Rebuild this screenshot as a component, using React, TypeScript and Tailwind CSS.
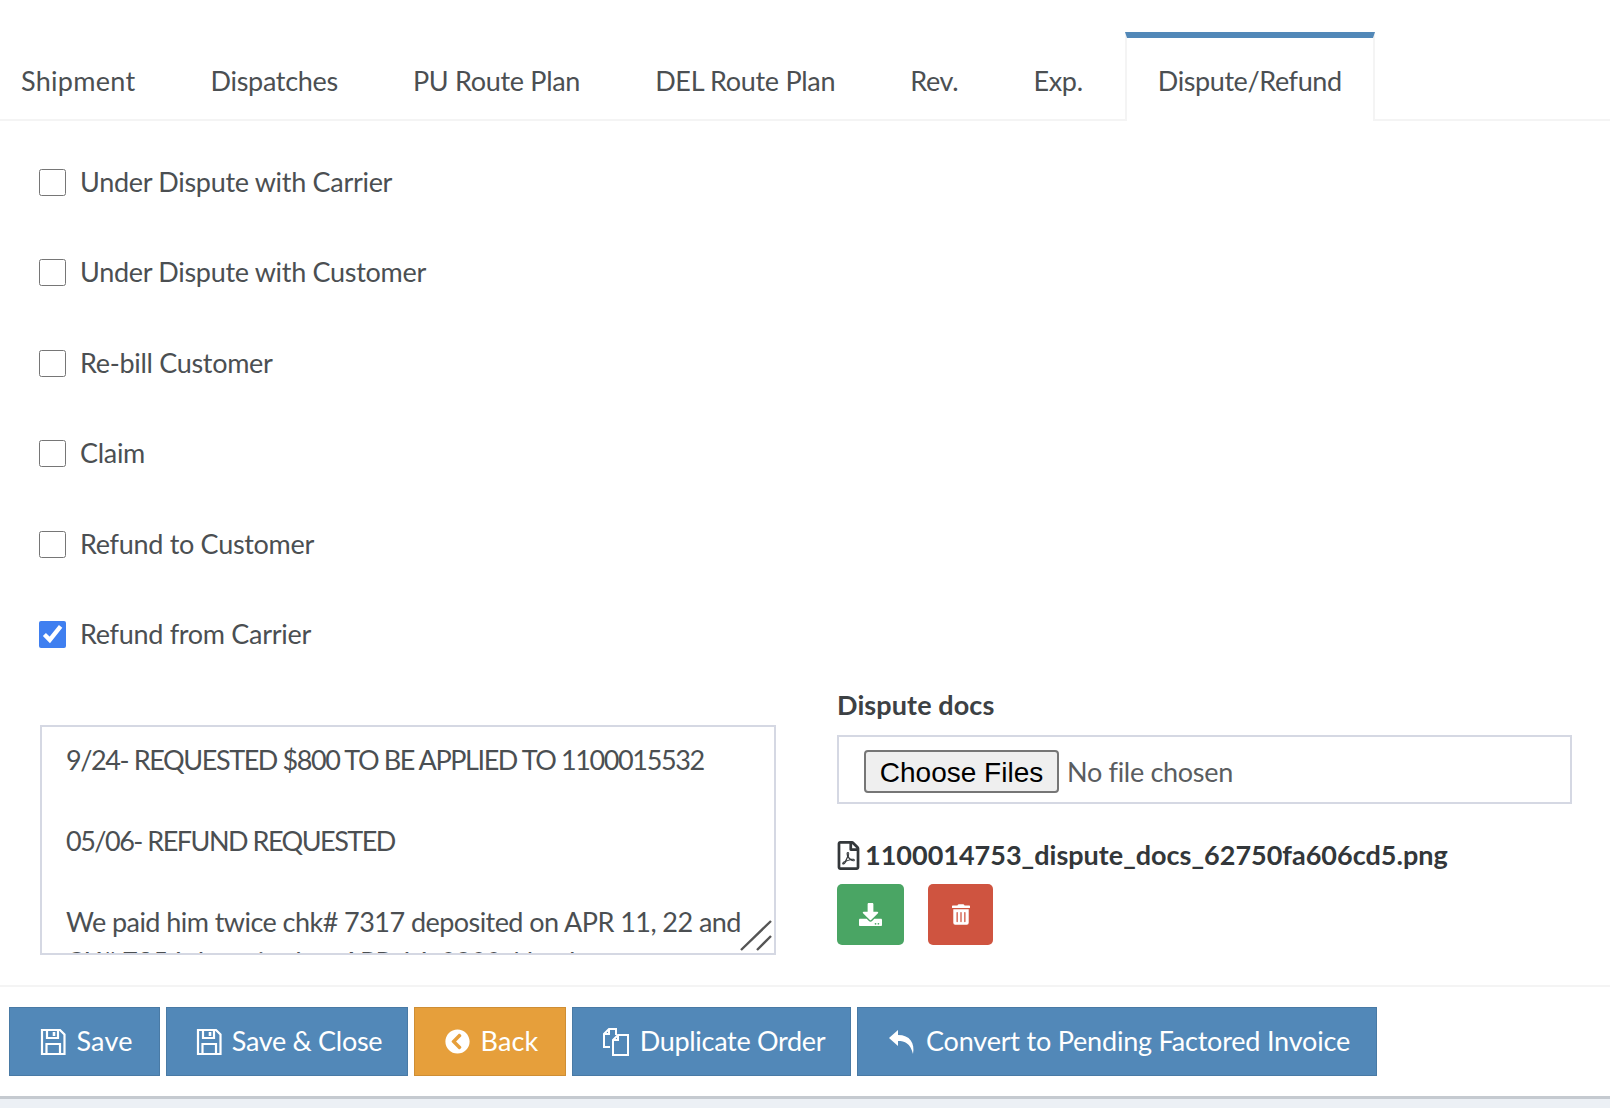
import { FunctionComponent, ReactElement, ReactNode } from "react";
import {
  FaChevronCircleLeft,
  FaDownload,
  FaRegFilePdf,
  FaTrashAlt,
} from "react-icons/fa";

const tabs = ["Shipment", "Dispatches", "PU Route Plan", "DEL Route Plan", "Rev.", "Exp."];

const checks = [
  { label: "Under Dispute with Carrier", checked: false },
  { label: "Under Dispute with Customer", checked: false },
  { label: "Re-bill Customer", checked: false },
  { label: "Claim", checked: false },
  { label: "Refund to Customer", checked: false },
  { label: "Refund from Carrier", checked: true },
];

const SaveIcon = () => (
  <svg viewBox="0 0 26 28" className="w-[26px] h-[28px]" fill="none" stroke="currentColor" strokeWidth="2.2">
    <path d="M2 2 H20 L24.5 6.5 V26 H2 Z" />
    <path d="M7 2 V10 H18 V2" />
    <path d="M6.5 26 V16 H20 V26" />
    <path d="M14 4 V8" strokeWidth="2.6" />
  </svg>
);

const DuplicateIcon = () => (
  <svg viewBox="0 0 28 30" className="w-[28px] h-[30px]" fill="none" stroke="currentColor" strokeWidth="2">
    <path d="M8 20 H2 V7 L7 2 H14 V8" />
    <path d="M7 2 V7 H2" />
    <path d="M11 13 L16 8 H26 V28 H11 Z" />
    <path d="M16 8 V13 H11" />
  </svg>
);

const ReplyIcon = () => (
  <svg viewBox="0 0 28 26" className="w-[28px] h-[26px]" fill="currentColor">
    <path d="M10 1 L1 9 L10 17 V12 C17 12 22 14 25 25 C27 14 22 6 10 6 Z" />
  </svg>
);

interface ActionButtonProps {
  icon: ReactNode;
  label: string;
  className: string;
}

const ActionButton: FunctionComponent<ActionButtonProps> = ({
  icon,
  label,
  className,
}): ReactElement => (
  <button
    className={`h-[69px] pl-[4px] flex items-center justify-center gap-[10px] border border-black/10 text-white text-[27px] ${className}`}
  >
    {icon}
    {label}
  </button>
);

export default function App() {
  return (
    <div className="w-[1610px] h-[1108px] overflow-hidden bg-white flex flex-col font-['Lato','Noto_Sans',sans-serif] text-[#4b4f52]">
      <div className="h-[121px] pt-[32px] flex items-stretch border-b-2 border-[#f4f4f4] text-[27px] tracking-[-0.3px]">
        {tabs.map((tab, i) => (
          <div
            key={tab}
            className={`flex items-center pt-[12px] mr-[9px] ${i === 0 ? "pl-[21px] pr-[33px] tracking-[0.3px]" : "px-[33px]"}`}
          >
            {tab}
          </div>
        ))}
        <div className="h-[89px] flex items-center pt-[4px] px-[31px] tracking-[-0.4px] bg-white border-x-2 border-[#f4f4f4] border-t-[6px] border-t-[#5288b8]">
          Dispute/Refund
        </div>
      </div>

      <div className="pl-[39px] pt-[37.5px] flex flex-col gap-[43.5px] text-[27px] tracking-[-0.3px]">
        {checks.map((c) => (
          <label key={c.label} className="h-[47px] flex items-center gap-[14px]">
            <input
              type="checkbox"
              defaultChecked={c.checked}
              className="w-[27px] h-[27px] m-0 accent-[#3f7ff0]"
            />
            {c.label}
          </label>
        ))}
      </div>

      <div className="mt-[29px] pl-[40px] pr-[38px] flex items-start gap-[61px]">
        <div className="relative mt-[38px] w-[736px] h-[230px] overflow-hidden border-2 border-[#d5d8e3] pl-[24px] pt-[13px] text-[27px] leading-[40.4px] whitespace-pre">
          <div className="tracking-[-1.4px]">9/24- REQUESTED $800 TO BE APPLIED TO 1100015532</div>
          <div className="h-[40.4px]" />
          <div className="tracking-[-1.5px]">05/06- REFUND REQUESTED</div>
          <div className="h-[40.4px]" />
          <div className="tracking-[-0.55px]">We paid him twice chk# 7317 deposited on APR 11, 22 and</div>
          <div className="tracking-[-0.55px]">CK# 7354 deposited on APR 14, 2022. Need</div>
          <svg
            viewBox="0 0 32 32"
            className="absolute right-[2px] bottom-[2px] w-[32px] h-[32px]"
            stroke="#555"
            strokeWidth="2.4"
          >
            <path d="M1 31 L31 2 M17 31 L31 17" />
          </svg>
        </div>

        <div className="w-[735px] flex flex-col items-start">
          <div className="h-[36px] flex items-center font-bold text-[27px] tracking-[0.1px] text-[#3d4144]">
            Dispute docs
          </div>
          <div className="mt-[12px] w-full h-[69px] border-2 border-[#d5d8e3] flex items-center pl-[25px] pt-[3px]">
            <input
              type="file"
              multiple
              className="w-[500px] text-[27px] tracking-[-0.3px] text-[#5a5d60] file:h-[43px] file:w-[195px] file:mr-[8px] file:px-0 file:font-['Liberation_Sans'] file:tracking-normal file:text-[28px] file:text-black file:bg-[#efefef] file:border-2 file:border-solid file:border-[#767676] file:rounded-[4px]"
            />
          </div>
          <div className="mt-[33px] h-[36px] flex items-center gap-[5px] font-bold text-[27px] text-[#33373a]">
            <FaRegFilePdf className="w-[23px] h-[29px] shrink-0 font-normal" />
            1100014753_dispute_docs_62750fa606cd5.png
          </div>
          <div className="mt-[11px] flex gap-[24px]">
            <button className="w-[67px] h-[61px] rounded-[5px] bg-[#4aa564] text-white flex items-center justify-center">
              <FaDownload className="w-[23px] h-[23px]" />
            </button>
            <button className="w-[65px] h-[61px] rounded-[5px] bg-[#cf5440] text-white flex items-center justify-center">
              <FaTrashAlt className="w-[18px] h-[21px]" />
            </button>
          </div>
        </div>
      </div>

      <div className="mt-[30px] border-t-2 border-[#f4f4f4] pt-[20px] pl-[9px] flex gap-[6px] h-[111px] tracking-[-0.3px]">
        <ActionButton icon={<SaveIcon />} label="Save" className="w-[151px] bg-[#5288b8] tracking-[0.2px]" />
        <ActionButton icon={<SaveIcon />} label="Save & Close" className="w-[242px] bg-[#5288b8]" />
        <ActionButton
          icon={<FaChevronCircleLeft className="w-[25px] h-[25px]" />}
          label="Back"
          className="w-[152px] bg-[#e69f3b] tracking-[0.2px]"
        />
        <ActionButton icon={<DuplicateIcon />} label="Duplicate Order" className="w-[279px] bg-[#5288b8]" />
        <ActionButton
          icon={<ReplyIcon />}
          label="Convert to Pending Factored Invoice"
          className="w-[520px] bg-[#5288b8] tracking-[-0.2px]"
        />
      </div>

      <div className="flex-1 border-t-[3px] border-[#c5cad0] bg-[#ecf0f5]" />
    </div>
  );
}
